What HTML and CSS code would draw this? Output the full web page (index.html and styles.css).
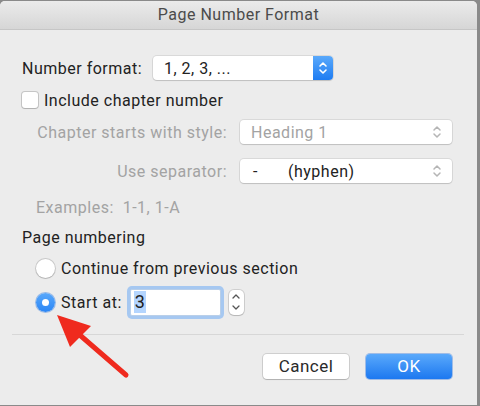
FILE: index.html
```html
<html>
    <head>
        <title>Page Number Format</title>
        <link rel="stylesheet" href="styles.css">
    </head>
    <body>
        <div class="window">
            <div class="titlebar">Page Number Format</div>

            <div class="content">
                <div class="row-format">
                    <span class="label">Number format:</span>
                    <div class="select select-main">
                        <span class="value">1, 2, 3, ...</span>
                        <span class="stepper-blue">
                            <svg width="10" height="16" viewBox="0 0 10 16"><path d="M2 6 L5 3 L8 6 M2 10 L5 13 L8 10" fill="none" stroke="#fff" stroke-width="1.6" stroke-linecap="round" stroke-linejoin="round"/></svg>
                        </span>
                    </div>
                </div>

                <div class="row-check">
                    <span class="checkbox"></span>
                    <span class="label">Include chapter number</span>
                </div>

                <div class="row-field row-style">
                    <span class="label dim">Chapter starts with style:</span>
                    <div class="select select-wide">
                        <span class="value dim">Heading 1</span>
                        <svg class="chev" width="10" height="16" viewBox="0 0 10 16"><path d="M2 6 L5 3 L8 6 M2 10 L5 13 L8 10" fill="none" stroke="#b5b5b5" stroke-width="1.5" stroke-linecap="round" stroke-linejoin="round"/></svg>
                    </div>
                </div>

                <div class="row-field row-sep">
                    <span class="label dim">Use separator:</span>
                    <div class="select select-wide">
                        <span class="value"><span class="dash">-</span>(hyphen)</span>
                        <svg class="chev" width="10" height="16" viewBox="0 0 10 16"><path d="M2 6 L5 3 L8 6 M2 10 L5 13 L8 10" fill="none" stroke="#b5b5b5" stroke-width="1.5" stroke-linecap="round" stroke-linejoin="round"/></svg>
                    </div>
                </div>

                <div class="row-examples dim">Examples:&nbsp; 1-1, 1-A</div>

                <div class="row-heading">Page numbering</div>

                <div class="row-radio">
                    <span class="radio"></span>
                    <span class="label">Continue from previous section</span>
                </div>

                <div class="row-radio row-start">
                    <span class="radio radio-on"><span class="dot"></span></span>
                    <span class="label">Start at:</span>
                    <div class="number-input"><span class="sel">3</span></div>
                    <div class="small-stepper">
                        <svg width="10" height="22" viewBox="0 0 10 22"><path d="M2 7 L5 4 L8 7 M2 15 L5 18 L8 15" fill="none" stroke="#555" stroke-width="1.3" stroke-linecap="round" stroke-linejoin="round"/></svg>
                    </div>
                </div>

                <div class="separator"></div>

                <div class="buttons">
                    <div class="btn btn-cancel">Cancel</div>
                    <div class="btn btn-ok">OK</div>
                </div>
            </div>
        </div>

        <svg class="arrow" width="480" height="406" viewBox="0 0 480 406">
            <line x1="126" y1="375" x2="74" y2="330" stroke="#ef2a1e" stroke-width="5" stroke-linecap="round"/>
            <polygon points="57,315 91,326 70,347" fill="#ef2a1e"/>
        </svg>
    </body>
</html>
```

FILE: styles.css
```css
body {
    margin: 0;
    width: 480px;
    height: 406px;
    background: #8a8a8a;
    font-family: "Roboto", "Liberation Sans", sans-serif;
    font-size: 16px;
    letter-spacing: 0.5px;
    color: #222;
    overflow: hidden;
}

.window {
    width: 477px;
    height: 404px;
    margin-top: 1px;
    background: #ececec;
    border-radius: 5px 5px 0 0;
    overflow: hidden;
}

.titlebar {
    height: 28px;
    line-height: 28px;
    text-align: center;
    color: #4b4b4b;
    background: linear-gradient(#ebebeb, #d6d6d6);
    border-bottom: 1px solid #c6c6c6;
}

.content {
    padding: 0 13px 0 22px;
    display: flex;
    flex-direction: column;
}

.dim {
    color: #a3a3a3;
}

.row-format {
    display: flex;
    align-items: center;
    height: 24px;
    margin-top: 26px;
}

.row-format .label {
    width: 131px;
}

.select {
    display: flex;
    align-items: center;
    background: #fff;
    border-radius: 4px;
    box-shadow: 0 0 0 1px rgba(0, 0, 0, 0.08), 0 1px 1px rgba(0, 0, 0, 0.12);
    height: 24px;
    box-sizing: border-box;
}

.select .value {
    flex: 1;
    padding-left: 11px;
}

.select-main {
    width: 180px;
}

.stepper-blue {
    width: 20px;
    height: 24px;
    border-radius: 0 4px 4px 0;
    background: linear-gradient(#5aa9fb, #1e7cf2);
    display: flex;
    align-items: center;
    justify-content: center;
}

.row-check {
    display: flex;
    align-items: center;
    height: 20px;
    margin-top: 10px;
}

.checkbox {
    width: 16px;
    height: 16px;
    background: #fff;
    border-radius: 3px;
    box-shadow: 0 0 0 1px rgba(0, 0, 0, 0.16), 0 1px 1px rgba(0, 0, 0, 0.1);
    margin-right: 6px;
}

.row-field {
    display: grid;
    grid-template-columns: 205px 212px;
    column-gap: 13px;
    align-items: center;
}

.row-field .label {
    text-align: right;
}

.row-style {
    margin-top: 10px;
}

.row-sep {
    margin-top: 15px;
}

.select-wide {
    width: 212px;
}

.select .chev {
    margin-right: 10px;
}

.dash {
    display: inline-block;
    width: 35px;
    padding-left: 2px;
}

.row-examples {
    height: 20px;
    line-height: 20px;
    margin-top: 15px;
    padding-left: 14px;
}

.row-heading {
    height: 20px;
    line-height: 20px;
    margin-top: 10px;
}

.row-radio {
    display: flex;
    align-items: center;
    height: 20px;
    margin-top: 10px;
    padding-left: 14px;
}

.radio {
    width: 19px;
    height: 19px;
    border-radius: 50%;
    background: #fff;
    box-shadow: 0 0 0 1px rgba(0, 0, 0, 0.15), 0 1px 1px rgba(0, 0, 0, 0.1);
    margin-right: 6px;
    display: flex;
    align-items: center;
    justify-content: center;
}

.radio-on {
    background: linear-gradient(#59a8fb, #2b86f5);
    box-shadow: 0 0 0 1px rgba(30, 110, 220, 0.4);
}

.radio-on .dot {
    width: 7px;
    height: 7px;
    border-radius: 50%;
    background: #fff;
}

.row-start {
    height: 30px;
    margin-top: 9px;
}

.number-input {
    width: 86px;
    height: 25px;
    margin-left: 8px;
    background: #fff;
    border: 1px solid #b9cfe9;
    box-shadow: 0 0 0 3px #a6c8f1;
    border-radius: 2px;
    display: flex;
    align-items: center;
    padding-left: 3px;
    font-size: 18px;
}

.sel {
    background: #b4d5fe;
    padding: 0 1px;
    line-height: 22px;
}

.small-stepper {
    width: 15px;
    height: 25px;
    margin-left: 8px;
    background: #fff;
    border-radius: 5px;
    box-shadow: 0 0 0 1px rgba(0, 0, 0, 0.12), 0 1px 1px rgba(0, 0, 0, 0.12);
    display: flex;
    align-items: center;
    justify-content: center;
}

.separator {
    height: 1px;
    background: #d7d7d7;
    margin: 17px 0 0 -10px;
}

.buttons {
    display: flex;
    justify-content: flex-end;
    gap: 17px;
    margin-top: 19px;
    padding-right: 12px;
}

.btn {
    width: 86px;
    height: 25px;
    line-height: 25px;
    text-align: center;
    border-radius: 4px;
    font-size: 17px;
}

.btn-cancel {
    background: #fff;
    color: #2a2a2a;
    box-shadow: 0 0 0 1px rgba(0, 0, 0, 0.12), 0 1px 1px rgba(0, 0, 0, 0.15);
}

.btn-ok {
    background: linear-gradient(#5aa9fb, #1c78f0);
    color: #fff;
    box-shadow: 0 0 0 1px rgba(20, 100, 220, 0.35);
}

.arrow {
    position: absolute;
    left: 0;
    top: 0;
}
```
